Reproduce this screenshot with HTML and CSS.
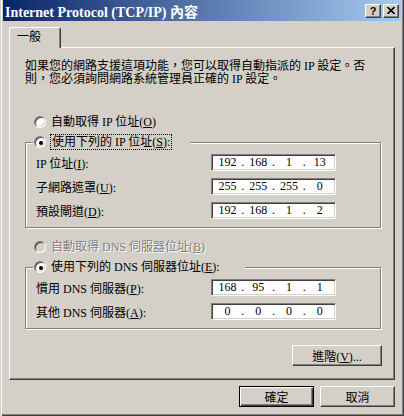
FILE: index.html
```html
<!DOCTYPE html>
<html>

<head>
	<meta charset="utf-8">
	<title>Internet Protocol (TCP/IP) 內容</title>
	<link rel="stylesheet" href="styles.css">
</head>

<body>
	<div class="window">
		<div class="titlebar">
			<span class="title">Internet Protocol (TCP/IP) 內容</span>
			<div class="caption-buttons">
				<div class="caption-btn">?</div>
				<div class="caption-btn">
					<svg width="8" height="7" viewBox="0 0 8 7">
						<path d="M0.5 0L7.5 7M7.5 0L0.5 7" stroke="#000" stroke-width="1.6" fill="none" />
					</svg>
				</div>
			</div>
		</div>

		<div class="dialog-body">
			<div class="tabs">
				<div class="tab">一般</div>
			</div>

			<div class="panel">
				<p class="intro">如果您的網路支援這項功能，您可以取得自動指派的 IP 設定。否則，您必須詢問網路系統管理員正確的 IP 設定。</p>

				<div class="option option-first">
					<span class="radio"></span>
					<span>自動取得 IP 位址(<u>O</u>)</span>
				</div>

				<fieldset class="group">
					<legend class="group-legend legend-ip">
						<span class="radio is-checked"></span>
						<span class="focus-ring">使用下列的 IP 位址(<u>S</u>):</span>
					</legend>
					<div class="field-row">
						<label>IP 位址(<u>I</u>):</label>
						<div class="ip-box" data-ip="192.168.1.13"></div>
					</div>
					<div class="field-row">
						<label>子網路遮罩(<u>U</u>):</label>
						<div class="ip-box" data-ip="255.255.255.0"></div>
					</div>
					<div class="field-row">
						<label>預設閘道(<u>D</u>):</label>
						<div class="ip-box" data-ip="192.168.1.2"></div>
					</div>
				</fieldset>

				<div class="option option-dns is-disabled">
					<span class="radio"></span>
					<span>自動取得 DNS 伺服器位址(<u>B</u>)</span>
				</div>

				<fieldset class="group">
					<legend class="group-legend legend-dns">
						<span class="radio is-checked"></span>
						<span>使用下列的 DNS 伺服器位址(<u>E</u>):</span>
					</legend>
					<div class="field-row">
						<label>慣用 DNS 伺服器(<u>P</u>):</label>
						<div class="ip-box" data-ip="168.95.1.1"></div>
					</div>
					<div class="field-row">
						<label>其他 DNS 伺服器(<u>A</u>):</label>
						<div class="ip-box" data-ip="0.0.0.0"></div>
					</div>
				</fieldset>

				<div class="panel-actions">
					<button class="button button-wide">進階(<u>V</u>)...</button>
				</div>
			</div>

			<div class="dialog-actions">
				<button class="button is-default">確定</button>
				<button class="button">取消</button>
			</div>
		</div>
	</div>

	<script>
		// Split each address into the four octet cells of the IP control
		document.querySelectorAll('.ip-box').forEach((box) => {
			box.dataset.ip.split('.').forEach((octet, i) => {
				if (i > 0) {
					const dot = document.createElement('span');
					dot.className = 'ip-dot';
					dot.textContent = '.';
					box.appendChild(dot);
				}
				const part = document.createElement('span');
				part.className = 'ip-part';
				part.textContent = octet;
				box.appendChild(part);
			});
		});
	</script>
</body>

</html>
```

FILE: styles.css
```css
* {
	box-sizing: border-box;
}

body {
	margin: 0;
	font-family: "Liberation Serif", "Noto Sans CJK TC", serif;
	font-size: 12px;
	color: #000;
	background-color: #d4d0c8;
}

u {
	text-underline-offset: 1px;
}

.window {
	display: flex;
	flex-direction: column;
	width: 404px;
	height: 416px;
	padding: 0 3px 3px 3px;
	background-color: #d4d0c8;
	box-shadow: inset 1px 0 #d4d0c8, inset 2px 0 #fff, inset -1px -1px #404040, inset -2px -2px #808080;
}

/* title bar */

.titlebar {
	display: flex;
	align-items: center;
	justify-content: space-between;
	height: 21px;
	padding: 0 2px;
	background: linear-gradient(to right, #0a246a, #a6caf0);
	color: #fff;
}

.title {
	font-size: 14px;
	font-weight: bold;
	white-space: nowrap;
}

.caption-buttons {
	display: flex;
	gap: 2px;
}

.caption-btn {
	display: flex;
	align-items: center;
	justify-content: center;
	width: 16px;
	height: 14px;
	border: 1px solid;
	border-color: #fff #404040 #404040 #fff;
	box-shadow: inset -1px -1px #808080;
	background-color: #d4d0c8;
	color: #000;
	font: bold 11px "Liberation Sans", sans-serif;
}

/* tab + panel */

.dialog-body {
	display: flex;
	flex-direction: column;
	padding: 6px 6px 0 6px;
}

.tabs {
	display: flex;
}

.tab {
	position: relative;
	z-index: 1;
	width: 52px;
	height: 21px;
	margin-bottom: -1px;
	padding: 2px 0 0 7px;
	border-top: 1px solid #fff;
	border-left: 1px solid #fff;
	border-right: 1px solid #404040;
	border-radius: 2px 2px 0 0;
	box-shadow: inset -1px 0 #808080;
	background-color: #d4d0c8;
	line-height: 14px;
}

.panel {
	height: 333px;
	padding: 12px 13px 0 15px;
	border-top: 1px solid #fff;
	border-left: 1px solid #fff;
	border-right: 1px solid #404040;
	border-bottom: 1px solid #404040;
	box-shadow: inset -1px -1px #808080;
}

.intro {
	margin: 0;
	line-height: 13px;
}

/* radio buttons */

.option {
	display: flex;
	align-items: center;
	gap: 5px;
	height: 14px;
	padding-left: 9px;
	line-height: 14px;
}

.option-first {
	margin-top: 29px;
}

.option-dns {
	margin-top: 12px;
}

.option.is-disabled {
	color: #808080;
	text-shadow: 1px 1px #fff;
}

.radio {
	position: relative;
	flex: none;
	width: 12px;
	height: 12px;
	border: 1px solid;
	border-color: #808080 #fff #fff #808080;
	border-radius: 50%;
	box-shadow: inset 1px 1px #404040, inset -1px -1px #d4d0c8;
	background-color: #fff;
}

.is-disabled .radio {
	background-color: #d4d0c8;
}

.radio.is-checked::after {
	content: "";
	position: absolute;
	left: 4px;
	top: 4px;
	width: 4px;
	height: 4px;
	border-radius: 50%;
	background-color: #000;
}

.focus-ring {
	outline: 1px dotted #000;
	padding: 0 1px;
}

/* group boxes */

.group {
	min-width: 0;
	margin: 6px 0 0 0;
	padding: 5px 0 8px 10px;
	border: 1px solid #808080;
	box-shadow: inset 1px 1px #fff, 1px 1px #fff;
}

.group-legend {
	display: flex;
	align-items: center;
	gap: 5px;
	height: 14px;
	margin-left: -3px;
	padding: 0 1px;
	background-color: #d4d0c8;
	line-height: 14px;
}

.legend-ip {
	width: 157px;
}

.legend-dns {
	width: 212px;
}

.field-row {
	display: flex;
	align-items: center;
	height: 17px;
}

.field-row + .field-row {
	margin-top: 7px;
}

.field-row label {
	width: 175px;
}

.ip-box {
	display: flex;
	align-items: center;
	width: 125px;
	height: 17px;
	padding: 0 3px;
	border: 1px solid;
	border-color: #808080 #fff #fff #808080;
	box-shadow: inset 1px 1px #404040, inset -1px -1px #d4d0c8;
	background-color: #fff;
}

.ip-part {
	flex: 1;
	text-align: center;
}

.ip-dot {
	width: 6px;
	text-align: center;
}

/* buttons */

.panel-actions {
	display: flex;
	justify-content: flex-end;
	margin-top: 16px;
	margin-right: -1px;
}

.dialog-actions {
	display: flex;
	justify-content: flex-end;
	gap: 6px;
	margin-top: 6px;
}

.button {
	width: 75px;
	height: 21px;
	padding: 0;
	border: 1px solid;
	border-color: #fff #404040 #404040 #fff;
	box-shadow: inset -1px -1px #808080;
	background-color: #d4d0c8;
	color: #000;
	font: inherit;
}

.button-wide {
	width: 90px;
}

.button.is-default {
	border-color: #000;
	box-shadow: inset 1px 1px #fff, inset -1px -1px #404040, inset -2px -2px #808080;
}
```
